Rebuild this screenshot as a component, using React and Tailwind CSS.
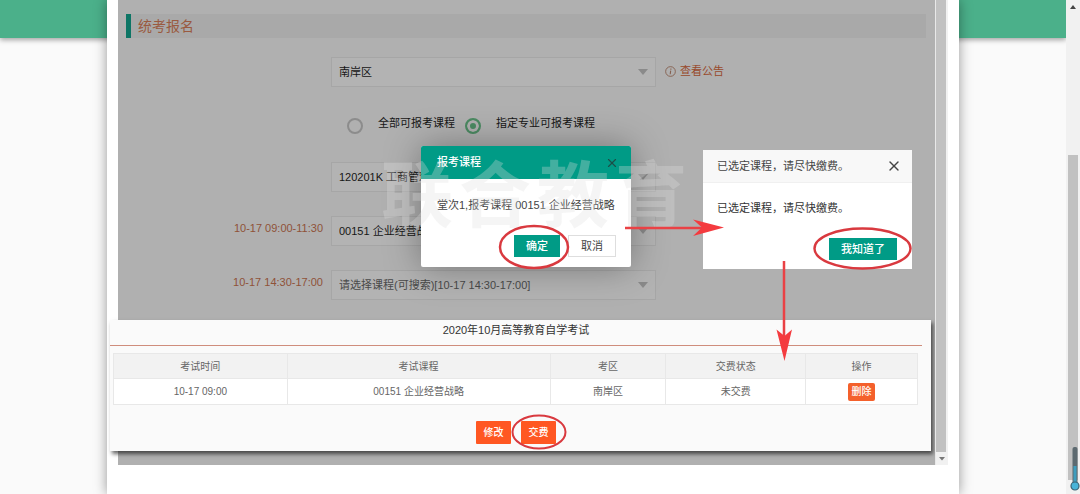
import { X } from 'lucide-react';

const exams = [
  { time: '10-17 09:00', course: '00151 企业经营战略', area: '南岸区', status: '未交费' },
];

/**
 * SelectField — flat drop-down with a solid arrow
 */
function SelectField({ id, label, value, muted }) {
  return (
    <div className="relative w-[325px] max-w-full">
      <select
        id={id}
        aria-label={label}
        className={`block w-full h-[30px] appearance-none border border-[#a6a6a6] bg-[#b3b3b3] pl-[7px] pr-6 text-[11px] ${
          muted ? 'text-[#4a4a4a]' : 'text-[#161616]'
        }`}
      >
        <option>{value}</option>
      </select>
      <svg className="pointer-events-none absolute right-2 top-3 h-[6px] w-[10px]" viewBox="0 0 10 6" aria-hidden="true">
        <path d="M0 0h10L5 6z" fill="#8a8a8a" />
      </svg>
    </div>
  );
}

function FormRow({ label, htmlFor, children }) {
  return (
    <div className="flex items-start gap-2">
      <label htmlFor={htmlFor} className="w-[205px] shrink-0 text-right leading-6 text-[#8f5238]">
        {label}
      </label>
      {children}
    </div>
  );
}

function RadioOption({ label, defaultChecked }) {
  return (
    <label className="flex items-start gap-[15px]">
      <input
        type="radio"
        name="scope"
        defaultChecked={defaultChecked}
        className="mt-[7px] h-4 w-4 appearance-none rounded-full border-2 border-[#8c8c8c] checked:border-[#4b8a62] checked:bg-[#4b8a62] checked:shadow-[inset_0_0_0_3px_#b0b0b0]"
      />
      <span className="leading-6 text-[#161616]">{label}</span>
    </label>
  );
}

/**
 * ScheduleTable — registered exams with their payment state
 */
function ScheduleTable() {
  return (
    <table className="w-full table-fixed border-collapse bg-white text-center text-[10px] text-[#666]">
      <colgroup>
        <col className="w-[21.6%]" />
        <col className="w-[32.7%]" />
        <col className="w-[14.4%]" />
        <col className="w-[17.4%]" />
        <col className="w-[13.9%]" />
      </colgroup>
      <thead>
        <tr className="h-[25px] bg-[#f2f2f2]">
          {['考试时间', '考试课程', '考区', '交费状态', '操作'].map((head) => (
            <th key={head} className="border border-[#e8e8e8] p-0 font-normal">
              {head}
            </th>
          ))}
        </tr>
      </thead>
      <tbody>
        {exams.map((exam) => (
          <tr key={exam.course} className="h-[26px]">
            <td className="border border-[#e8e8e8] p-0">{exam.time}</td>
            <td className="border border-[#e8e8e8] p-0">{exam.course}</td>
            <td className="border border-[#e8e8e8] p-0">{exam.area}</td>
            <td className="border border-[#e8e8e8] p-0">{exam.status}</td>
            <td className="border border-[#e8e8e8] p-0">
              <button className="mx-auto block h-[18px] w-[27px] rounded-[2px] bg-[#f4602b] text-[10px] font-medium text-white">
                删除
              </button>
            </td>
          </tr>
        ))}
      </tbody>
    </table>
  );
}

function ConfirmDialog() {
  return (
    <div
      role="dialog"
      aria-label="报考课程"
      className="absolute left-[314px] top-[146px] w-[210px] rounded-[2px] bg-white shadow-[0_0_36px_rgba(0,0,0,0.35)]"
    >
      <div className="flex h-[33px] items-center justify-between rounded-t-[2px] bg-[#009b86] pl-4 pr-3">
        <h2 className="font-medium text-white">报考课程</h2>
        <button aria-label="关闭">
          <X size={14} strokeWidth={2} color="#1c4f48" />
        </button>
      </div>
      <p className="whitespace-nowrap px-4 pt-[18px] leading-4 text-[#444]">堂次1,报考课程 00151 企业经营战略</p>
      <div className="flex justify-end gap-2 px-[15px] pb-[10px] pt-[22px]">
        <button className="h-[22px] w-[46px] bg-[#009b86] font-medium text-white">确定</button>
        <button className="h-[22px] w-[48px] border border-[#dedede] bg-white text-[#444]">取消</button>
      </div>
    </div>
  );
}

function NoticeDialog() {
  return (
    <div role="dialog" aria-label="提示" className="absolute left-[596px] top-[150px] w-[209px] bg-white">
      <div className="flex h-[33px] items-center justify-between border-b border-[#f0f0f0] bg-[#f8f8f8] pl-[14px] pr-[10px]">
        <h2 className="text-[#444]">已选定课程，请尽快缴费。</h2>
        <button aria-label="关闭">
          <X size={16} strokeWidth={2} color="#444" />
        </button>
      </div>
      <p className="px-[14px] pt-[17px] leading-4 text-[#333]">已选定课程，请尽快缴费。</p>
      <div className="flex justify-end px-[15px] pb-[9px] pt-[22px]">
        <button className="h-[22px] w-[68px] bg-[#009b86] font-medium text-white">我知道了</button>
      </div>
    </div>
  );
}

/* Red circles and arrows that walk through the steps */
function StepMarks() {
  return (
    <svg
      className="pointer-events-none absolute left-0 top-0 h-[494px] w-[852px]"
      viewBox="107 0 852 494"
      fill="none"
      stroke="#d9393f"
      strokeWidth="2.5"
      aria-hidden="true"
    >
      <ellipse cx="534" cy="247" rx="34" ry="21" />
      <ellipse cx="862.500" cy="248.500" rx="48" ry="20" />
      <ellipse cx="539" cy="432" rx="26.500" ry="16.500" strokeWidth="2" />
      <path d="M625 228H702M784 261V340" stroke="#ea4145" />
      <path d="M724 227.500L693 219.500L702 227.500L693 236Z" fill="#f43b3f" stroke="none" />
      <path d="M784.500 361L776.500 329.500L784.500 336L792 329.500Z" fill="#f43b3f" stroke="none" />
    </svg>
  );
}

export default function App() {
  return (
    <div className="flex min-h-screen bg-[#fafafa] font-['Liberation_Sans','Noto_Sans_CJK_SC',sans-serif] text-[11px]">
      <div className="min-w-0 flex-1">
        <header className="h-[38px] bg-[#4bb08a] shadow-[0_2px_5px_rgba(0,0,0,0.35)]" />

        <main className="relative mx-[107px] -mt-[38px] min-h-screen bg-white px-[11px] shadow-[0_0_12px_rgba(0,0,0,0.4)]">
          <div className="flex">
            <section className="min-w-0 flex-1 bg-[#b0b0b0] pb-[14px] pt-[14px]">
              <h1 className="ml-2 mr-[9px] h-6 border-l-[5px] border-[#0d7565] bg-[#a9a9a9] pl-[7px] text-[14px] leading-6 text-[#9a5a40]">
                统考报名
              </h1>

              <form className="mt-[19px] flex flex-col gap-6">
                <FormRow>
                  <SelectField label="考区" value="南岸区" />
                  <a href="#notice" className="flex items-center gap-1 pl-px leading-7 text-[#98492b]">
                    <svg className="h-[11px] w-[11px]" viewBox="0 0 12 12" fill="none" stroke="#86604f" aria-hidden="true">
                      <circle cx="6" cy="6" r="5.300" strokeWidth="1" />
                      <path d="M6.400 2.800v1.200M6.200 5L5.700 9" strokeWidth="1.200" />
                    </svg>
                    查看公告
                  </a>
                </FormRow>
                <FormRow>
                  <div className="flex h-[27px] gap-[10px] pl-4">
                    <RadioOption label="全部可报考课程" />
                    <RadioOption label="指定专业可报考课程" defaultChecked />
                  </div>
                </FormRow>
                <FormRow>
                  <SelectField label="专业" value="120201K 工商管理" />
                </FormRow>
                <FormRow label="10-17 09:00-11:30" htmlFor="morning">
                  <SelectField id="morning" value="00151 企业经营战略" />
                </FormRow>
                <FormRow label="10-17 14:30-17:00" htmlFor="afternoon">
                  <SelectField id="afternoon" value="请选择课程(可搜索)[10-17 14:30-17:00]" muted />
                </FormRow>
              </form>

              <div className="-ml-2 mr-1 mt-5 bg-[#fafafa] pb-[7px] pr-[9px] shadow-[2px_3px_4px_rgba(0,0,0,0.6)]">
                <h2 className="border-b border-[#cf8d7c] pb-[5px] text-center leading-5 text-[#333]">
                  2020年10月高等教育自学考试
                </h2>
                <div className="pl-[3px] pr-1 pt-[7px]">
                  <ScheduleTable />
                </div>
                <div className="flex justify-center gap-[10px] pt-4">
                  <button className="h-[23px] w-[35px] rounded-[1px] bg-[#ff5722] text-[10px] font-medium text-white">
                    修改
                  </button>
                  <button className="h-[23px] w-[35px] rounded-[1px] bg-[#ff5722] text-[10px] font-medium text-white">
                    交费
                  </button>
                </div>
              </div>
            </section>

            {/* Frame scrollbar */}
            <div className="flex w-[13px] flex-col border-l border-[#e8e8e8] bg-[#f1f1f1]">
              <div className="mr-[2px] flex-1 bg-[#c1c1c1]" />
              <svg className="h-[13px] w-3" viewBox="0 0 12 13" aria-hidden="true">
                <path d="M3 5h6L6 8.500z" fill="#777" />
              </svg>
            </div>
          </div>

          <ConfirmDialog />
          <NoticeDialog />

          <div
            aria-hidden="true"
            className="pointer-events-none absolute left-[274px] top-[160px] flex gap-[6px] text-[72px] font-bold leading-[72px] text-[#dedede]/30"
          >
            <span>联</span>
            <span>合</span>
            <span>教</span>
            <span>育</span>
          </div>

          <StepMarks />
        </main>
      </div>

      {/* Page scrollbar */}
      <div className="relative flex w-[14px] flex-col bg-[#f1f1f1] px-[2px] pb-[14px]">
        <svg className="h-[14px] w-[10px]" viewBox="0 0 10 14" aria-hidden="true">
          <path d="M2 9h6L5 5z" fill="#444" />
        </svg>
        <div className="grow-[141]" />
        <div className="grow-[325] bg-[#c1c1c1]" />
        <svg className="absolute bottom-0 right-0 h-12 w-[10px]" viewBox="0 0 10 48" aria-hidden="true">
          <rect x="2.500" y="1" width="5" height="40" rx="2" fill="#5d6a70" />
          <rect x="3.500" y="20" width="3" height="22" fill="#3e9dbd" />
          <circle cx="5" cy="40" r="4" fill="#48b4d8" stroke="#3c6474" strokeWidth="1.200" />
        </svg>
      </div>
    </div>
  );
}
